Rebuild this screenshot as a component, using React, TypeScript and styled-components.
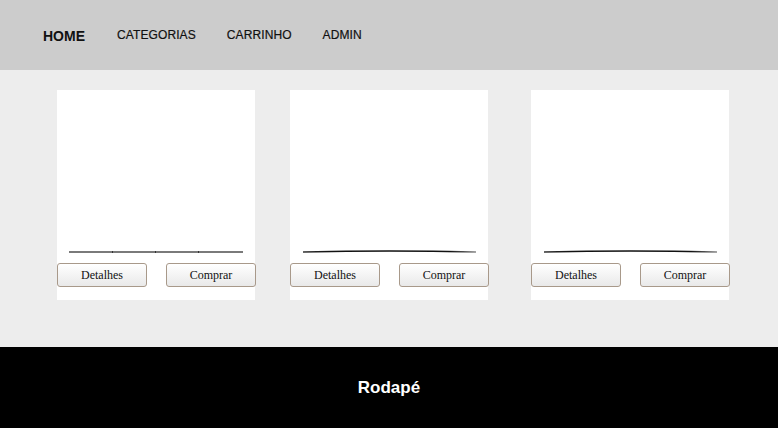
import React from "react";
import styled, { createGlobalStyle } from "styled-components";

const GlobalStyle = createGlobalStyle`
  html, body {
    margin: 0;
    padding: 0;
    background: #ededed;
    font-family: "Liberation Sans", Arial, sans-serif;
  }
`;

const Page = styled.div`
  width: 778px;
  height: 428px;
  display: flex;
  flex-direction: column;
  background: #ededed;
`;

const Header = styled.header`
  height: 70px;
  background: #cccccc;
  display: flex;
  align-items: center;
  padding-left: 43px;
  box-sizing: border-box;
`;

const NavLink = styled.a<{ active?: boolean }>`
  color: #111;
  text-decoration: none;
  font-size: ${(p) => (p.active ? "14px" : "12px")};
  font-weight: ${(p) => (p.active ? "bold" : "normal")};
  letter-spacing: ${(p) => (p.active ? "0" : "0.1px")};
  margin-right: ${(p) => (p.active ? "32px" : "31px")};
  position: relative;
  top: ${(p) => (p.active ? "1px" : "0")};
  -webkit-text-stroke: ${(p) => (p.active ? "0" : "0.2px #111")};
`;

const Main = styled.main`
  height: 277px;
  display: flex;
  align-items: flex-start;
  padding: 20px 0 0 57px;
  box-sizing: border-box;
`;

const Card = styled.div<{ offset: number }>`
  width: 198px;
  height: 210px;
  background: #fff;
  margin-left: ${(p) => p.offset}px;
  display: flex;
  flex-direction: column;
`;

const Picture = styled.div`
  height: 163px;
  display: flex;
  align-items: flex-end;
  padding: 0 12px 0 12px;
`;

const Buttons = styled.div`
  display: flex;
  justify-content: space-between;
  width: 199px;
  margin-top: 10px;
`;

const Button = styled.button`
  width: 90px;
  height: 24px;
  padding: 0;
  font-family: "Liberation Serif", "Times New Roman", serif;
  font-size: 12px;
  color: #111;
  border: 1px solid #a8998a;
  border-radius: 3px;
  background: linear-gradient(#ffffff, #e9e9e9);
  cursor: pointer;
`;

const Footer = styled.footer`
  height: 81px;
  background: #000;
  color: #fff;
  display: flex;
  align-items: center;
  justify-content: center;
  font-size: 17px;
  font-weight: bold;
`;

const FlatLine = () => (
  <svg width="174" height="4" viewBox="0 0 174 4" style={{ display: "block", marginBottom: -1 }}>
    <rect x="0" y="1" width="174" height="2" fill="#7a7a7a" />
    <rect x="43" y="1" width="1" height="2" fill="#333" />
    <rect x="86" y="1" width="1" height="2" fill="#333" />
    <rect x="129" y="1" width="1" height="2" fill="#333" />
  </svg>
);

const CurvedLine = ({ id }: { id: string }) => (
  <svg width="174" height="4" viewBox="0 0 174 4" style={{ display: "block", marginLeft: 1 }}>
    <defs>
      <linearGradient id={id} x1="0" x2="1" y1="0" y2="0">
        <stop offset="0" stopColor="#333" />
        <stop offset="0.15" stopColor="#111" />
        <stop offset="0.85" stopColor="#111" />
        <stop offset="1" stopColor="#888" />
      </linearGradient>
    </defs>
    <path d="M0 3 Q87 1 174 3" stroke={`url(#${id})`} strokeWidth="1.3" fill="none" />
  </svg>
);

const products = [
  { offset: 0, curved: false },
  { offset: 35, curved: true },
  { offset: 43, curved: true },
];

export default function App() {
  return (
    <>
      <GlobalStyle />
      <Page>
        <Header>
          <NavLink active href="#">HOME</NavLink>
          <NavLink href="#">CATEGORIAS</NavLink>
          <NavLink href="#">CARRINHO</NavLink>
          <NavLink href="#">ADMIN</NavLink>
        </Header>
        <Main>
          {products.map((p, i) => (
            <Card key={i} offset={p.offset}>
              <Picture>{p.curved ? <CurvedLine id={`g${i}`} /> : <FlatLine />}</Picture>
              <Buttons>
                <Button>Detalhes</Button>
                <Button>Comprar</Button>
              </Buttons>
            </Card>
          ))}
        </Main>
        <Footer>Rodapé</Footer>
      </Page>
    </>
  );
}
